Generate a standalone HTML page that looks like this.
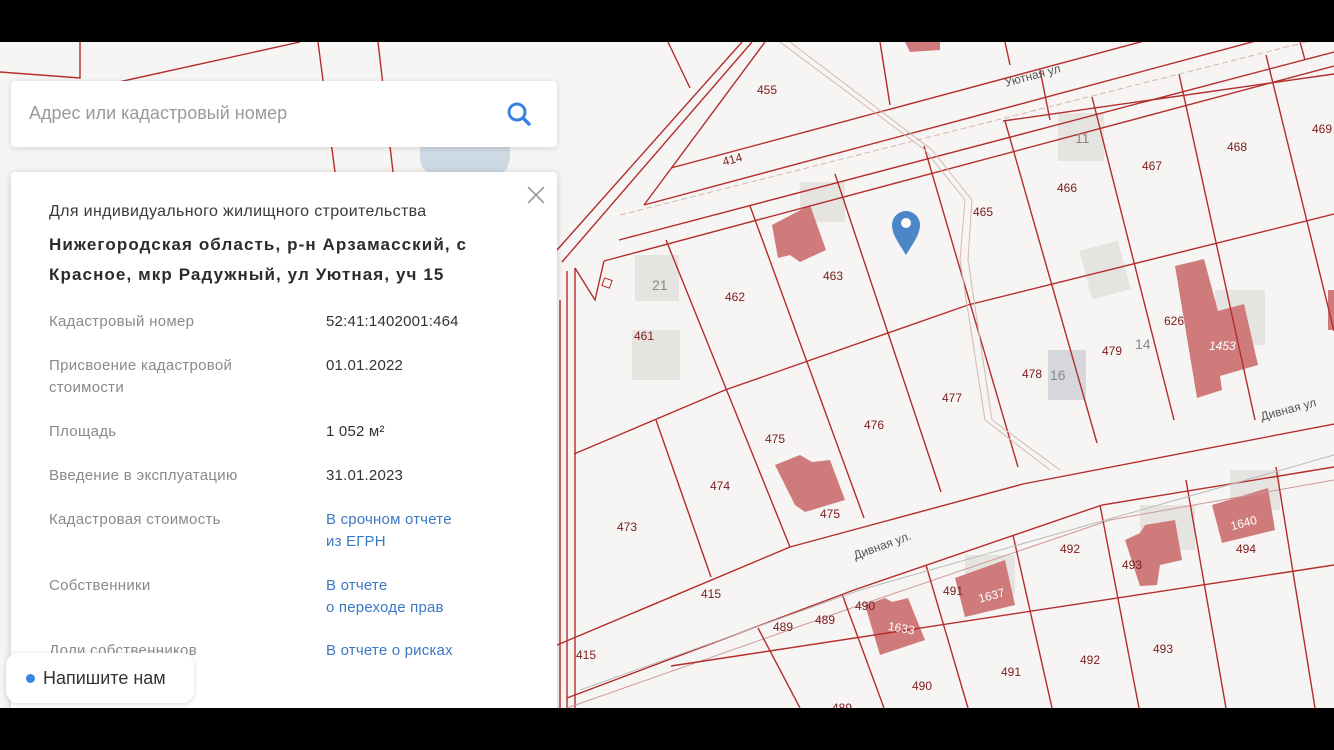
<!DOCTYPE html>
<html><head><meta charset="utf-8">
<style>
*{margin:0;padding:0;box-sizing:border-box}
body{width:1334px;height:750px;overflow:hidden;background:#000;font-family:"Liberation Sans","DejaVu Sans",sans-serif;position:relative}
#map{position:absolute;left:0;top:42px;width:1334px;height:666px;background:#f6f5f3;overflow:hidden}
svg text{font-family:"Liberation Sans",sans-serif;font-size:12px;fill:#7a1c1c}
.search{position:absolute;left:11px;top:81px;width:546px;height:66px;background:#fff;border-radius:4px;box-shadow:0 1px 6px rgba(0,0,0,.15)}
.search span{position:absolute;left:18px;top:22px;font-size:18px;color:#9a9a9a}
.panel{position:absolute;left:11px;top:172px;width:546px;height:560px;background:#fff;border-radius:4px;box-shadow:0 1px 8px rgba(0,0,0,.18)}
.t1{position:absolute;left:38px;top:31px;font-size:16px;color:#3a3a3a;letter-spacing:.35px}
.t2{position:absolute;left:38px;top:58px;font-size:17px;font-weight:bold;color:#2b2b2b;line-height:30px;width:440px;letter-spacing:1.1px}
.lab{position:absolute;left:38px;font-size:15px;color:#8a8a8a;line-height:22px;letter-spacing:.3px}
.val{position:absolute;left:315px;font-size:15px;color:#333;line-height:22px;letter-spacing:.2px}
.lnk{color:#3b78c6}
.chat{position:absolute;left:6px;top:653px;width:188px;height:50px;background:#fff;border-radius:12px;box-shadow:0 1px 6px rgba(0,0,0,.15)}
.chat i{position:absolute;left:20px;top:21px;width:9px;height:9px;border-radius:50%;background:#3b82e6}
.chat span{position:absolute;left:37px;top:15px;font-size:18px;color:#333}
.bar{position:absolute;left:0;width:1334px;background:#000}
</style></head><body>
<div id="map">
<svg width="1334" height="666" viewBox="0 42 1334 666">
<rect x="420" y="82" width="90" height="95" rx="20" fill="#cdd9e3"/>
<g fill="#e6e4e1">
<rect x="1058" y="113" width="46" height="48"/>
<rect x="635" y="255" width="44" height="46"/>
<rect x="632" y="330" width="48" height="50"/>
<rect x="1085" y="245" width="40" height="50" transform="rotate(-15 1105 270)"/>
<rect x="800" y="182" width="45" height="40"/>
<rect x="1215" y="290" width="50" height="55"/>
<rect x="1140" y="505" width="55" height="45"/>
<rect x="1230" y="470" width="50" height="40"/>
<rect x="965" y="555" width="50" height="40"/>
</g>
<rect x="1048" y="350" width="38" height="50" fill="#d6d7dd"/>
<g fill="#cf7b7b">
<polygon points="1175,266 1204,259 1218,311 1244,304 1258,365 1220,376 1222,390 1197,398"/>
<polygon points="772,225 810,205 826,250 800,262 790,255 778,258"/>
<polygon points="775,465 800,455 812,462 830,460 845,500 805,512 795,505"/>
<polygon points="865,605 885,598 892,602 908,598 925,640 880,655"/>
<polygon points="955,578 1005,560 1015,605 965,617"/>
<polygon points="1212,505 1268,488 1275,530 1222,543"/>
<polygon points="1125,540 1140,533 1145,525 1175,520 1182,560 1160,565 1157,585 1140,586"/>
<polygon points="905,42 940,42 940,50 910,52"/>
<rect x="1328" y="290" width="6" height="40"/>
</g>
<g stroke="#b32d2d" stroke-width="1.4" fill="none">
<path d="M0 72 L80 78 L80 42 M105 85 L300 42 M318 42 L335 172 M378 42 L393 172"/>
<path d="M557 250 L742 42 M562 262 L752 42 M644 205 L765 42"/>
<path d="M567 271 L567 708 M575 268 L575 708 M560 300 L560 708"/>
<path d="M671 168 L1334 -10 M644 205 L1334 20 M619 240 L1334 52 M604 261 L1334 66"/>
<path d="M604 261 L595 300 L575 268"/>
<path d="M574 454 L725 390 L968 305 L1334 214"/>
<path d="M1003 121 L1334 74"/>
<path d="M666 240 L790 547 M750 206 L864 518 M835 174 L941 492 M924 146 L1018 467 M1005 121 L1097 443 M1092 97 L1174 420 M1179 74 L1255 420 M1266 55 L1334 331 M656 420 L711 577 M1040 70 L1050 120"/>
<path d="M668 42 L690 88 M880 42 L890 105 M1005 42 L1010 65 M1300 42 L1305 60"/>
<path d="M557 645 L790 547 L1023 484 L1334 424"/>
<path d="M567 698 L854 590 L1102 505 L1334 467"/>
<path d="M567 708 L860 605 L1110 520 L1334 480" stroke="#c99" stroke-width="1"/>
<path d="M671 666 L1334 565"/>
<path d="M758 628 L800 708 M842 594 L884 708 M926 565 L968 708 M1013 535 L1052 708 M1100 505 L1139 708 M1186 480 L1226 708 M1276 467 L1315 708"/>
</g>
<g stroke="#d6b7b0" stroke-width="1" fill="none">
<path d="M780 42 L925 150 L965 200 L960 260 L985 420 L1050 470"/>
<path d="M790 42 L932 150 L972 200 L968 260 L992 420 L1060 470"/>
<path d="M620 215 L1334 35" stroke-dasharray="6 3"/>
<path d="M580 690 L860 590 L1334 455" stroke="#bbb"/>
</g>
<text x="757" y="94">455</text><text x="722" y="163" transform="rotate(-15 734 158)">414</text>
<text x="1227" y="151">468</text><text x="1142" y="170">467</text><text x="1057" y="192">466</text>
<text x="973" y="216">465</text><text x="823" y="280">463</text><text x="725" y="301">462</text>
<text x="634" y="340">461</text><text x="1312" y="133">469</text>
<text x="1102" y="355">479</text><text x="1022" y="378">478</text><text x="942" y="402">477</text>
<text x="864" y="429">476</text><text x="765" y="443">475</text><text x="710" y="490">474</text>
<text x="617" y="531">473</text><text x="820" y="518">475</text><text x="1164" y="325">626</text>
<text x="1060" y="553">492</text><text x="1080" y="664">492</text><text x="1001" y="676">491</text>
<text x="912" y="690">490</text><text x="773" y="631">489</text><text x="815" y="624">489</text>
<text x="855" y="610">490</text><text x="943" y="595">491</text><text x="1236" y="553">494</text>
<text x="1122" y="569">493</text><text x="1153" y="653">493</text><text x="701" y="598">415</text>
<text x="576" y="659">415</text><text x="832" y="712">489</text>
<text x="1075" y="143" style="fill:#888;font-size:14px">11</text>
<text x="652" y="290" style="fill:#888;font-size:14px">21</text>
<text x="1050" y="380" style="fill:#888;font-size:14px">16</text>
<text x="1135" y="349" style="fill:#888;font-size:14px">14</text>
<text x="1209" y="350" style="fill:#fff;font-style:italic">1453</text>
<text x="1230" y="528" style="fill:#fff" transform="rotate(-15 1240 522)">1640</text>
<text x="978" y="600" style="fill:#fff" transform="rotate(-15 990 595)">1637</text>
<text x="888" y="632" style="fill:#fff" transform="rotate(10 900 628)">1633</text>
<text x="1260" y="413" transform="rotate(-15 1290 410)" style="fill:#555">Дивная ул</text>
<text x="850" y="550" transform="rotate(-20 880 540)" style="fill:#555">Дивная ул.</text>
<text x="1003" y="80" transform="rotate(-15 1030 72)" style="fill:#555">Уютная ул</text>
<rect x="603" y="279" width="8" height="8" fill="none" stroke="#b32d2d" transform="rotate(20 607 283)"/>
<path d="M906 255 C898 242 892 234 892 225 A14 14 0 0 1 920 225 C920 234 914 242 906 255Z" fill="#4a86c8"/>
<circle cx="906" cy="223" r="5" fill="#fff"/>
</svg>
</div>
<div class="search"><span>Адрес или кадастровый номер</span>
<svg style="position:absolute;left:495px;top:20px" width="26" height="26" viewBox="0 0 26 26"><circle cx="11" cy="11" r="8" fill="none" stroke="#3b82e0" stroke-width="3"/><path d="M17 17 L23 23" stroke="#3b82e0" stroke-width="3.5" stroke-linecap="round"/></svg>
</div>
<div class="panel">
<svg style="position:absolute;left:515px;top:13px" width="20" height="20"><path d="M2 2 L18 18 M18 2 L2 18" stroke="#999" stroke-width="1.6"/></svg>
<div class="t1">Для индивидуального жилищного строительства</div>
<div class="t2">Нижегородская область, р-н Арзамасский, с Красное, мкр Радужный, ул Уютная, уч 15</div>
<div class="lab" style="top:139px">Кадастровый номер</div><div class="val" style="top:139px">52:41:1402001:464</div>
<div class="lab" style="top:183px">Присвоение кадастровой<br>стоимости</div><div class="val" style="top:183px">01.01.2022</div>
<div class="lab" style="top:249px">Площадь</div><div class="val" style="top:249px">1 052 м²</div>
<div class="lab" style="top:293px">Введение в эксплуатацию</div><div class="val" style="top:293px">31.01.2023</div>
<div class="lab" style="top:337px">Кадастровая стоимость</div><div class="val lnk" style="top:337px">В срочном отчете<br>из ЕГРН</div>
<div class="lab" style="top:403px">Собственники</div><div class="val lnk" style="top:403px">В отчете<br>о переходе прав</div>
<div class="lab" style="top:468px">Доли собственников</div><div class="val lnk" style="top:468px">В отчете о рисках</div>
</div>
<div class="chat"><i></i><span>Напишите нам</span></div>
<div class="bar" style="top:0;height:42px"></div>
<div class="bar" style="top:708px;height:42px"></div>
</body></html>
